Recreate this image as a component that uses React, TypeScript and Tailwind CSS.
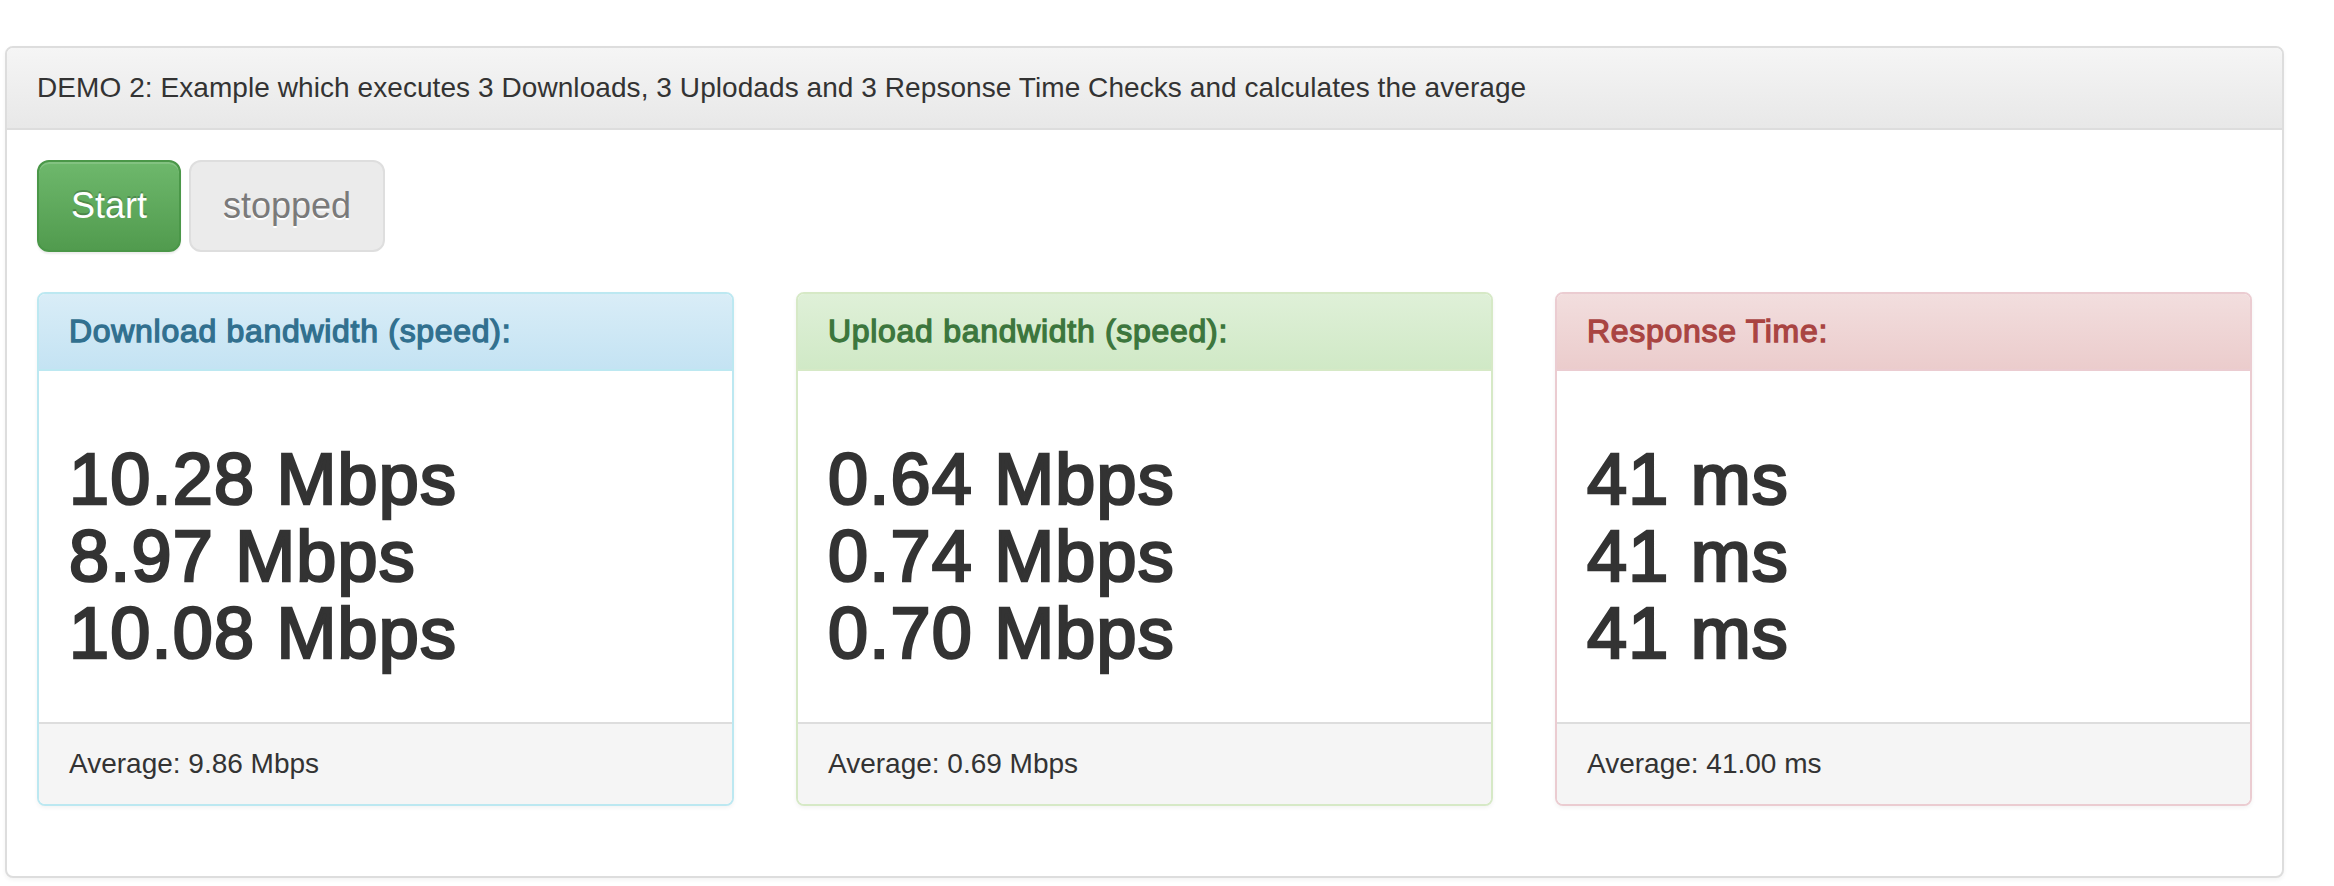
import React from 'react';

type Tone = 'info' | 'success' | 'danger';

interface ResultCardProps {
  tone: Tone;
  title: string;
  values: string[];
  average: string;
}

const toneClasses: Record<Tone, { card: string; heading: string }> = {
  info: {
    card: 'border-[#bce8f1]',
    heading: 'border-[#bce8f1] bg-gradient-to-b from-[#d9edf7] to-[#c4e3f3] text-[#31708f]',
  },
  success: {
    card: 'border-[#d6e9c6]',
    heading: 'border-[#d6e9c6] bg-gradient-to-b from-[#dff0d8] to-[#d0e9c6] text-[#3c763d]',
  },
  danger: {
    card: 'border-[#ebccd1]',
    heading: 'border-[#ebccd1] bg-gradient-to-b from-[#f2dede] to-[#ebcccc] text-[#a94442]',
  },
};

function ResultCard({ tone, title, values, average }: ResultCardProps) {
  const t = toneClasses[tone];
  return (
    <div className={`overflow-hidden rounded-[8px] border-2 bg-white shadow-[0_2px_4px_rgba(0,0,0,0.05)] ${t.card}`}>
      <div className={`border-b-2 px-[30px] py-[20px] ${t.heading}`}>
        <h3 className="text-[32px] leading-[35px] font-normal tracking-[0.7px] [-webkit-text-stroke:1.3px_currentColor]">
          {title}
        </h3>
      </div>
      <div className="p-[30px]">
        <h1 className="mt-[40px] mb-[20px] text-[72px] leading-[77px] font-normal tracking-[1.2px] text-[#333] [-webkit-text-stroke:2.6px_currentColor]">
          {values.map((v, i) => (
            <div key={i}>{v}</div>
          ))}
        </h1>
      </div>
      <div className="border-t-2 border-[#ddd] bg-[#f5f5f5] px-[30px] py-[20px] text-[28px] leading-[40px] text-[#333]">
        {average}
      </div>
    </div>
  );
}

export default function App() {
  return (
    <div
      className="min-h-screen bg-white pt-[46px] pl-[5px] text-[#333]"
      style={{ fontFamily: '"Liberation Sans", Arial, Helvetica, sans-serif' }}
    >
      <div className="w-[2279px] overflow-hidden rounded-[8px] border-2 border-[#ddd] bg-white shadow-[0_2px_4px_rgba(0,0,0,0.05)]">
        <div className="border-b-2 border-[#ddd] bg-gradient-to-b from-[#f5f5f5] to-[#e8e8e8] px-[30px] py-[20px] text-[28px] leading-[40px] tracking-[0.07px]">
          DEMO 2: Example which executes 3 Downloads, 3 Uplodads and 3 Repsonse Time Checks and calculates the average
        </div>
        <div className="p-[30px]">
          <div className="flex gap-[8px]">
            <button className="rounded-[12px] border-2 border-[#4a9748] bg-gradient-to-b from-[#6eb86c] to-[#519b4e] px-[32px] py-[20px] text-[36px] leading-[48px] text-white shadow-[inset_0_2px_0_rgba(255,255,255,0.15),0_2px_2px_rgba(0,0,0,0.075)] [text-shadow:0_-2px_0_rgba(0,0,0,0.2)]">
              Start
            </button>
            <button className="rounded-[12px] border-2 border-[#dedede] bg-[#ebebeb] px-[32px] py-[20px] text-[36px] leading-[48px] text-[#7a7a7a] [text-shadow:0_2px_0_#fff]">
              stopped
            </button>
          </div>
          <div className="mt-[40px] mb-[40px] grid grid-cols-3 gap-[62px]">
            <ResultCard
              tone="info"
              title="Download bandwidth (speed):"
              values={['10.28 Mbps', '8.97 Mbps', '10.08 Mbps']}
              average="Average: 9.86 Mbps"
            />
            <ResultCard
              tone="success"
              title="Upload bandwidth (speed):"
              values={['0.64 Mbps', '0.74 Mbps', '0.70 Mbps']}
              average="Average: 0.69 Mbps"
            />
            <ResultCard
              tone="danger"
              title="Response Time:"
              values={['41 ms', '41 ms', '41 ms']}
              average="Average: 41.00 ms"
            />
          </div>
        </div>
      </div>
    </div>
  );
}
